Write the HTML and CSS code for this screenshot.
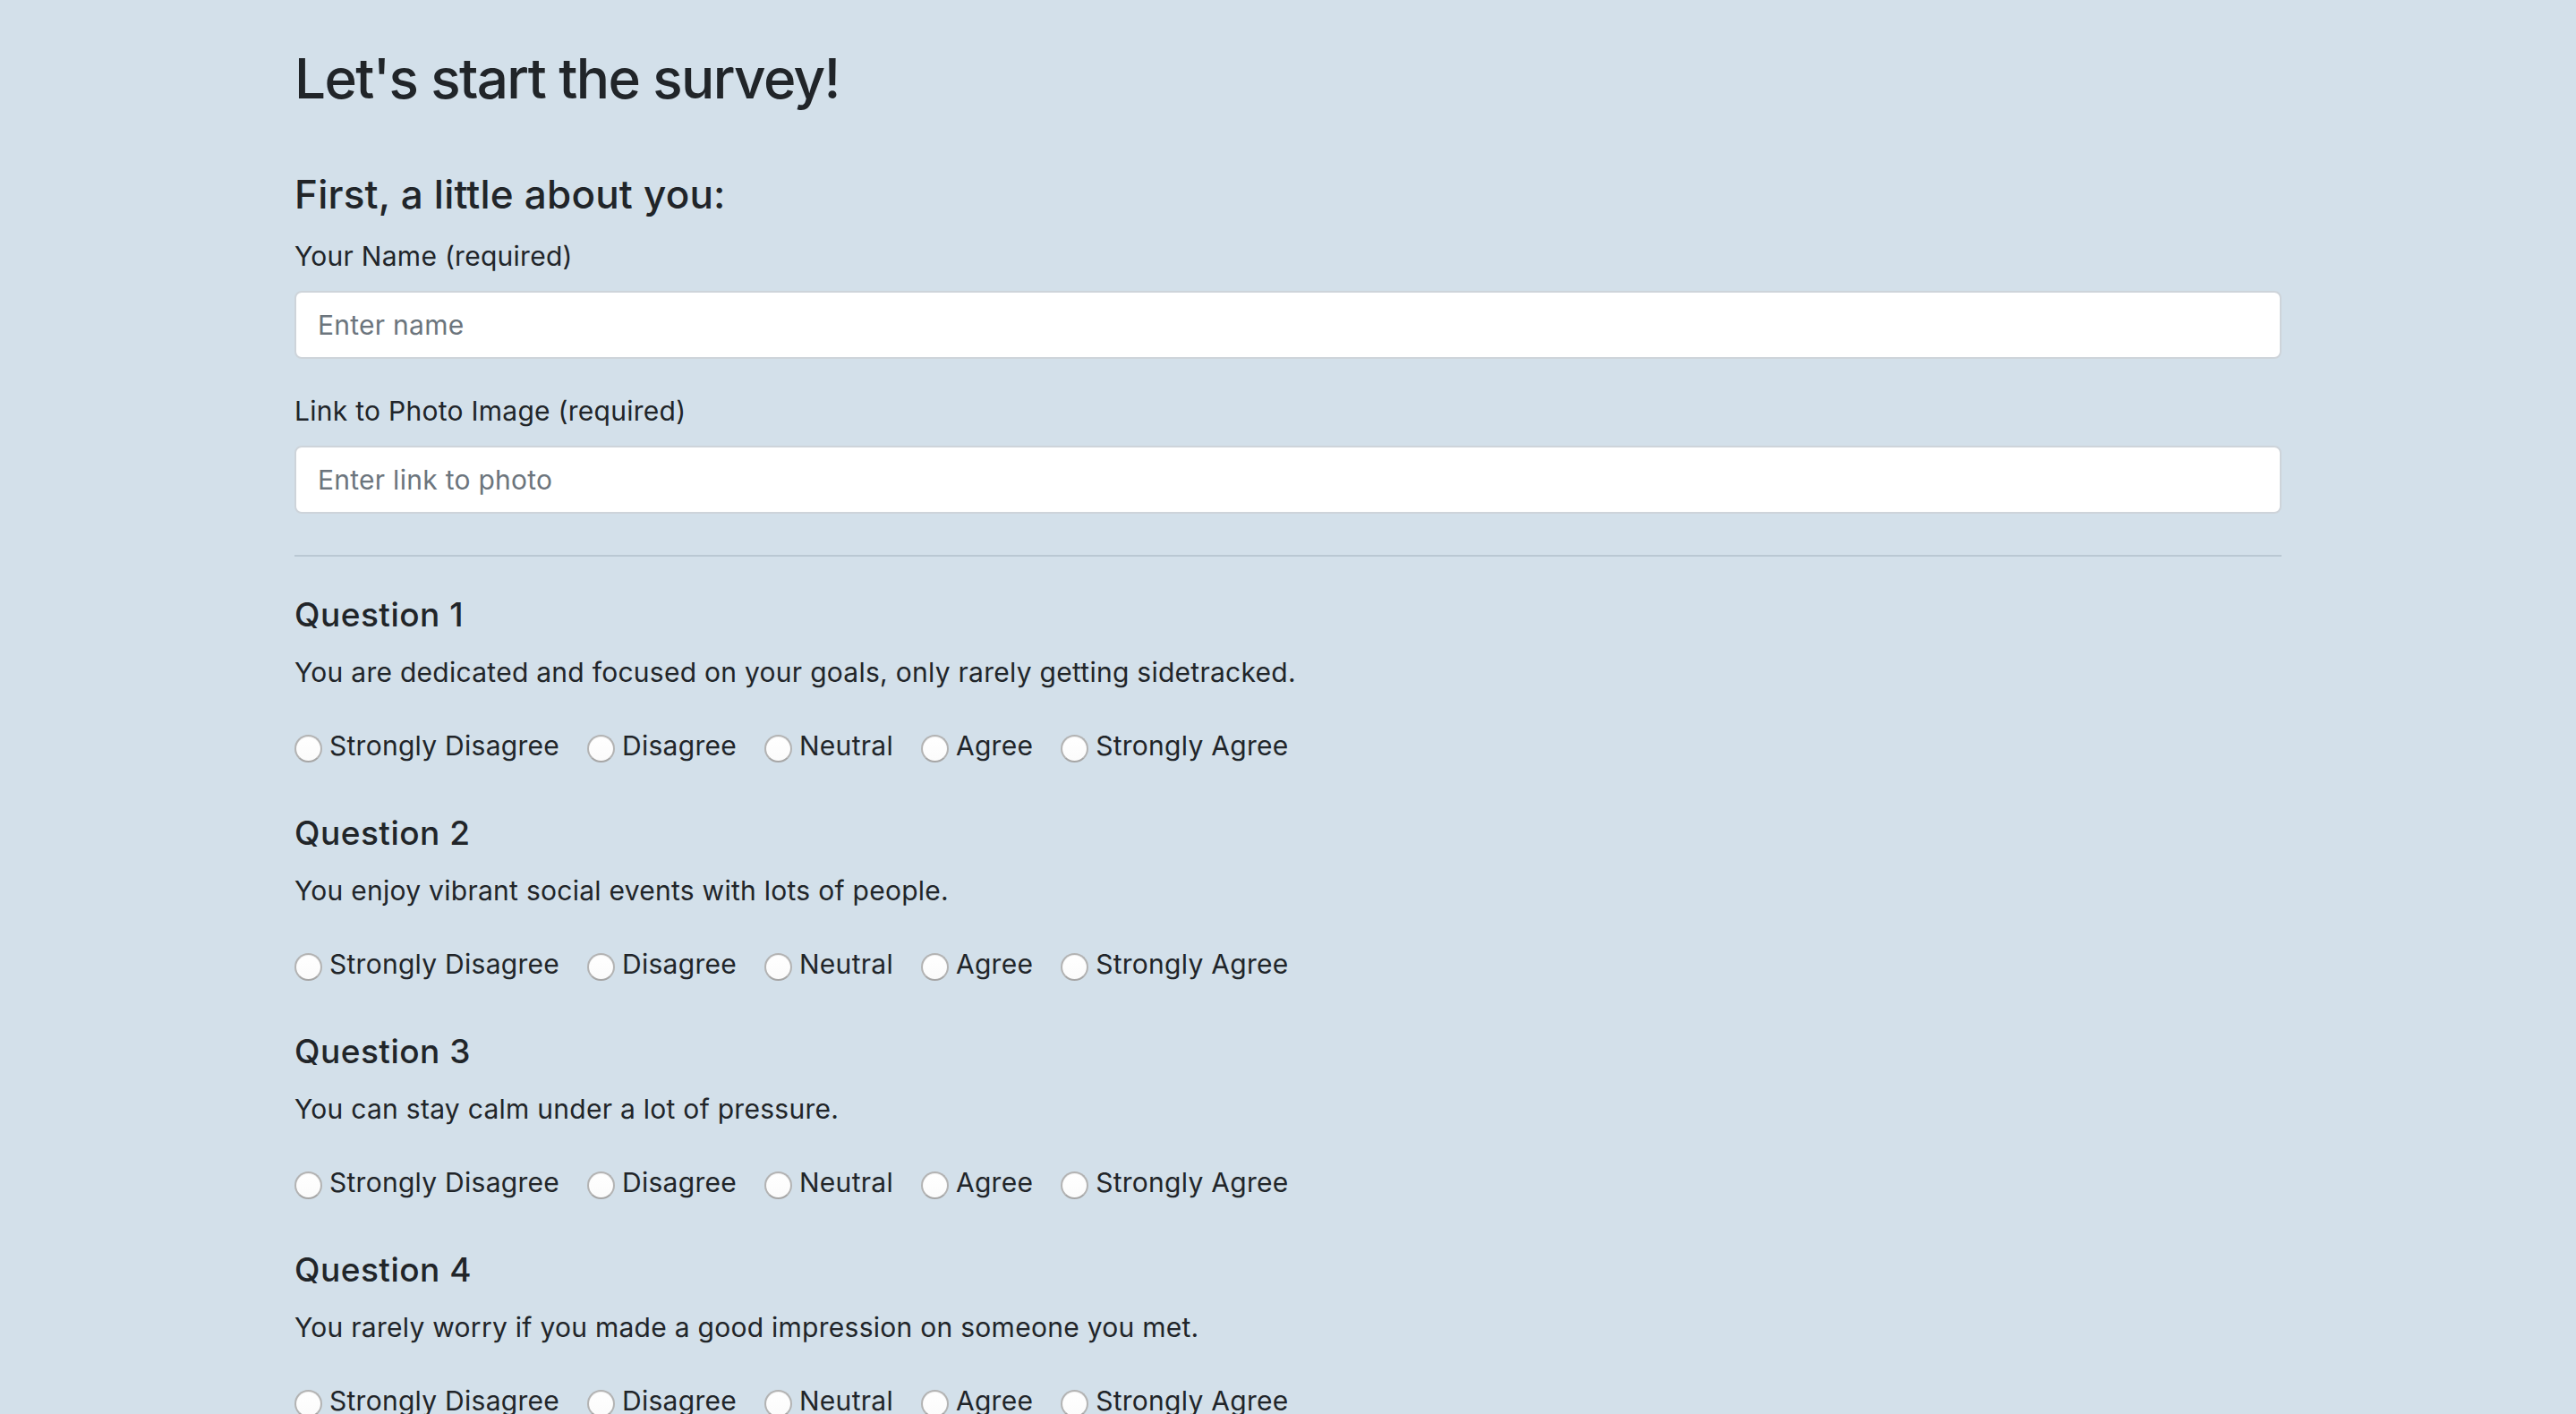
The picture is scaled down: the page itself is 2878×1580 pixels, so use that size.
FILE: index.html
```html
<!DOCTYPE html>
<html lang="en">
<head>
<meta charset="utf-8">
<title>Survey</title>
<link rel="stylesheet" href="styles.css">
</head>
<body>
<div class="container">
  <h1 class="title">Let's start the survey!</h1>
  <h4 class="subtitle">First, a little about you:</h4>
  <div class="form-group">
    <label class="field-label" for="name">Your Name (required)</label>
    <input class="form-control" id="name" type="text" placeholder="Enter name">
  </div>
  <div class="form-group">
    <label class="field-label" for="photo">Link to Photo Image (required)</label>
    <input class="form-control" id="photo" type="text" placeholder="Enter link to photo">
  </div>
  <hr class="divider">

  <div class="question">
    <h5 class="q-title">Question 1</h5>
    <p class="q-text">You are dedicated and focused on your goals, only rarely getting sidetracked.</p>
    <div class="options">
      <label class="option"><input type="radio" name="q1" class="radio"><span>Strongly Disagree</span></label>
      <label class="option"><input type="radio" name="q1" class="radio"><span>Disagree</span></label>
      <label class="option"><input type="radio" name="q1" class="radio"><span>Neutral</span></label>
      <label class="option"><input type="radio" name="q1" class="radio"><span>Agree</span></label>
      <label class="option"><input type="radio" name="q1" class="radio"><span>Strongly Agree</span></label>
    </div>
  </div>

  <div class="question">
    <h5 class="q-title">Question 2</h5>
    <p class="q-text">You enjoy vibrant social events with lots of people.</p>
    <div class="options">
      <label class="option"><input type="radio" name="q2" class="radio"><span>Strongly Disagree</span></label>
      <label class="option"><input type="radio" name="q2" class="radio"><span>Disagree</span></label>
      <label class="option"><input type="radio" name="q2" class="radio"><span>Neutral</span></label>
      <label class="option"><input type="radio" name="q2" class="radio"><span>Agree</span></label>
      <label class="option"><input type="radio" name="q2" class="radio"><span>Strongly Agree</span></label>
    </div>
  </div>

  <div class="question">
    <h5 class="q-title">Question 3</h5>
    <p class="q-text">You can stay calm under a lot of pressure.</p>
    <div class="options">
      <label class="option"><input type="radio" name="q3" class="radio"><span>Strongly Disagree</span></label>
      <label class="option"><input type="radio" name="q3" class="radio"><span>Disagree</span></label>
      <label class="option"><input type="radio" name="q3" class="radio"><span>Neutral</span></label>
      <label class="option"><input type="radio" name="q3" class="radio"><span>Agree</span></label>
      <label class="option"><input type="radio" name="q3" class="radio"><span>Strongly Agree</span></label>
    </div>
  </div>

  <div class="question">
    <h5 class="q-title">Question 4</h5>
    <p class="q-text">You rarely worry if you made a good impression on someone you met.</p>
    <div class="options">
      <label class="option"><input type="radio" name="q4" class="radio"><span>Strongly Disagree</span></label>
      <label class="option"><input type="radio" name="q4" class="radio"><span>Disagree</span></label>
      <label class="option"><input type="radio" name="q4" class="radio"><span>Neutral</span></label>
      <label class="option"><input type="radio" name="q4" class="radio"><span>Agree</span></label>
      <label class="option"><input type="radio" name="q4" class="radio"><span>Strongly Agree</span></label>
    </div>
  </div>
</div>
</body>
</html>
```
FILE: styles.css
```css
html, body {
  margin: 0;
  padding: 0;
}
body {
  background: #d3e0ea;
  color: #212529;
  font-family: Inter, "Noto Sans", "Liberation Sans", sans-serif;
  font-size: 30px;
  line-height: 45px;
  letter-spacing: 0.27px;
  overflow: hidden;
}
.container {
  width: 2220px;
  margin: 0 auto;
  padding-top: 51px;
}
.title {
  margin: 0 0 66px;
  font-size: 62px;
  line-height: 74px;
  font-weight: 500;
  letter-spacing: -1.6px;
}
.subtitle {
  margin: 0 0 20px;
  font-size: 44px;
  line-height: 53px;
  font-weight: 500;
  letter-spacing: 0.2px;
}
.form-group {
  display: flex;
  flex-direction: column;
  margin-bottom: 36px;
}
.form-group + .form-group {
  margin-bottom: 46px;
}
.field-label {
  display: block;
  margin-bottom: 16px;
}
.form-control {
  box-sizing: border-box;
  height: 76px;
  width: 100%;
  padding: 0 24px;
  border: 2px solid #ced4da;
  border-radius: 8px;
  background: #fff;
  font-family: inherit;
  font-size: 30px;
  letter-spacing: 0.27px;
  color: #495057;
  outline: none;
}
.form-control::placeholder {
  color: #6c757d;
}
.divider {
  margin: 0 0 43px;
  border: 0;
  border-top: 2px solid #bac8d3;
  height: 0;
}
.question {
  margin-bottom: 53px;
}
.q-title {
  margin: 0 0 21px;
  font-size: 37px;
  line-height: 43px;
  font-weight: 500;
  letter-spacing: 0.5px;
}
.q-text {
  margin: 0 0 37px;
}
.options {
  display: flex;
  align-items: center;
  gap: 31px;
}
.option {
  display: flex;
  align-items: center;
  gap: 8px;
}
.radio {
  appearance: none;
  -webkit-appearance: none;
  box-sizing: border-box;
  width: 31px;
  height: 31px;
  margin: 0;
  border-radius: 50%;
  border: 2px solid #b3b3b3;
  border-bottom-color: #a6a6a6;
  background: linear-gradient(#ffffff, #fbfbfb);
  box-shadow: inset 0 1px 1px rgba(0,0,0,0.06);
  flex: none;
  position: relative;
  top: 3px;
}
```
